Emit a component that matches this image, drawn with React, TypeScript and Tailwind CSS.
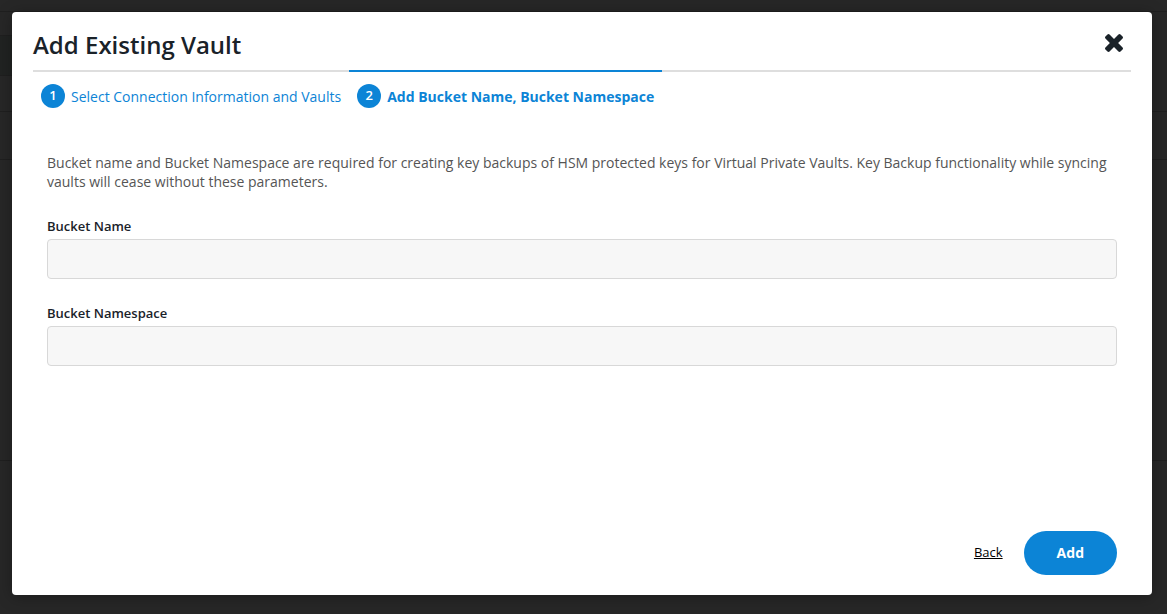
import { useId } from "react";

function Step({ number, label, active }: { number: number; label: string; active?: boolean }) {
  return (
    <li className={active ? "-mt-0.5 border-t-2 border-[#0c84d6] px-2 pt-3" : "px-2 pt-3"}>
      <button type="button" className="flex items-center gap-1.5 text-[#0c84d6]">
        <span className="flex size-6 items-center justify-center rounded-full bg-[#0c84d6] text-[13px] font-semibold text-white">
          {number}
        </span>
        <span className={active ? "pt-0.5 text-sm font-bold" : "pt-0.5 text-sm"}>{label}</span>
      </button>
    </li>
  );
}

function Field({ label }: { label: string }) {
  const id = useId();
  return (
    <div className="flex flex-col gap-1">
      <label htmlFor={id} className="text-[13px] leading-[18px] font-semibold text-[#1a2229]">
        {label}
      </label>
      <input
        id={id}
        type="text"
        className="h-10 w-full rounded border border-[#d8d8d8] bg-[#f7f7f7] px-3 text-sm text-[#1a2229] outline-none"
      />
    </div>
  );
}

export default function App() {
  return (
    <div className="relative flex min-h-screen bg-[#272727] pt-3 pr-[15px] pb-[19px] pl-3 font-['Open_Sans',sans-serif]">
      <div aria-hidden="true" className="absolute inset-0 flex flex-col">
        <div className="h-3 border-b border-[#1f1f1f]" />
        <div className="h-6 w-3 border-b border-[#1f1f1f]" />
        <div className="h-10 w-3 border-b border-[#1f1f1f] bg-[#212322]" />
        <div className="h-9 border-b border-[#1f1f1f]" />
        <div className="h-12 border-b border-[#1f1f1f]" />
        <div className="h-[301px] border-b border-[#1f1f1f]" />
      </div>
      <section
        role="dialog"
        aria-labelledby="title"
        className="relative flex flex-1 flex-col rounded bg-white px-[21px] pb-5 shadow-[0_2px_16px_rgba(0,0,0,0.3)]"
      >
        <header className="flex h-[60px] items-center justify-between border-b-2 border-[#dedede] pt-2">
          <h1 id="title" className="text-2xl font-semibold text-[#1a2229]">
            Add Existing Vault
          </h1>
          <button type="button" aria-label="Close" className="mr-2 pb-1 text-[#1a2229]">
            <svg viewBox="110 366 1188 1188" className="size-[18px]" fill="currentColor" aria-hidden="true">
              <path d="M1298 1322q0 40-28 68l-136 136q-28 28-68 28t-68-28l-294-294-294 294q-28 28-68 28t-68-28l-136-136q-28-28-28-68t28-68l294-294-294-294q-28-28-28-68t28-68l136-136q28-28 68-28t68 28l294 294 294-294q28-28 68-28t68 28l136 136q28 28 28 68t-28 68l-294 294 294 294q28 28 28 68z" />
            </svg>
          </button>
        </header>
        <ol className="flex">
          <Step number={1} label="Select Connection Information and Vaults" />
          <Step number={2} label="Add Bucket Name, Bucket Namespace" active />
        </ol>
        <form className="flex flex-1 flex-col px-3.5 pt-[45px]">
          <p className="mb-[26px] text-sm leading-[19px] text-[#555555]">
            Bucket name and Bucket Namespace are required for creating key backups of HSM protected keys for Virtual
            Private Vaults. Key Backup functionality while syncing vaults will cease without these parameters.
          </p>
          <div className="flex flex-col gap-[25px]">
            <Field label="Bucket Name" />
            <Field label="Bucket Namespace" />
          </div>
          <footer className="mt-auto flex items-center justify-end gap-[21px]">
            <button type="button" className="text-[13px] text-black underline">
              Back
            </button>
            <button type="button" className="h-11 rounded-full bg-[#0c84d6] px-[33px] text-sm font-bold text-white">
              Add
            </button>
          </footer>
        </form>
      </section>
    </div>
  );
}
